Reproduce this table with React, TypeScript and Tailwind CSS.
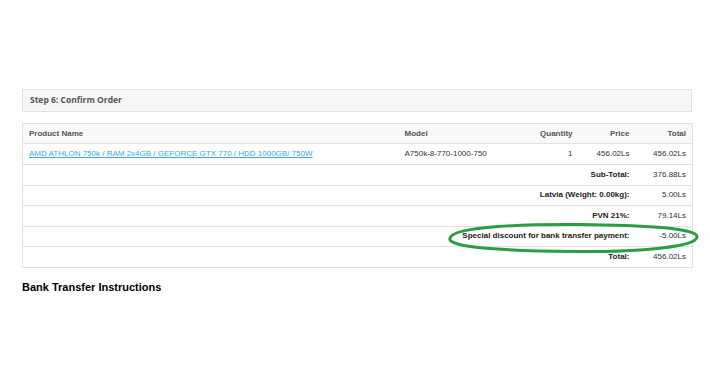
const rows = [
  { label: 'Sub-Total:', value: '376.88Ls' },
  { label: 'Latvia (Weight: 0.00kg):', value: '5.00Ls' },
  { label: 'PVN 21%:', value: '79.14Ls' },
  { label: 'Special discount for bank transfer payment:', value: '-5.00Ls' },
  { label: 'Total:', value: '456.02Ls' },
];

export default function App() {
  return (
    <div className="relative h-[380px] w-[710px] bg-white text-[8px] text-[#333] font-['Liberation_Sans',Arial,sans-serif]">
      <div className="ml-[22px] w-[670px] pt-[89px]">
        {/* checkout step header */}
        <div className="h-[23px] border border-[#e2e2e2] bg-[#f6f6f6] pl-[7px] flex items-center font-['Open_Sans',Arial,sans-serif] text-[8.5px] font-bold text-[#555]">
          Step 6: Confirm Order
        </div>

        <table className="mt-[11px] w-full border-collapse table-fixed border border-[#e2e2e2] leading-none">
          <colgroup>
            <col className="w-[376px]" />
            <col className="w-[122px]" />
            <col className="w-[58px]" />
            <col className="w-[57px]" />
            <col className="w-[57px]" />
          </colgroup>
          <thead>
            <tr className="h-[20px] bg-[#f8f8f8] font-bold text-[#555]">
              <td className="px-[6px] border-b border-[#e2e2e2]">Product Name</td>
              <td className="px-[6px] border-b border-[#e2e2e2]">Model</td>
              <td className="px-[6px] text-right border-b border-[#e2e2e2]">Quantity</td>
              <td className="px-[6px] text-right border-b border-[#e2e2e2]">Price</td>
              <td className="px-[6px] text-right border-b border-[#e2e2e2]">Total</td>
            </tr>
          </thead>
          <tbody>
            <tr className="h-[21px]">
              <td className="px-[6px] border-b border-[#e2e2e2]">
                <a href="#" className="text-[#3aa9dc] underline whitespace-nowrap">
                  AMD ATHLON 750k / RAM 2x4GB / GEFORCE GTX 770 / HDD 1000GB/ 750W
                </a>
              </td>
              <td className="px-[6px] border-b border-[#e2e2e2] whitespace-nowrap">A750k-8-770-1000-750</td>
              <td className="px-[6px] text-right border-b border-[#e2e2e2]">1</td>
              <td className="px-[6px] text-right border-b border-[#e2e2e2]">456.02Ls</td>
              <td className="px-[6px] text-right border-b border-[#e2e2e2]">456.02Ls</td>
            </tr>
            {rows.map((r) => (
              <tr key={r.label} className="h-[20.5px]">
                <td colSpan={4} className="px-[6px] text-right font-bold text-[#222] border-b border-[#e2e2e2]">
                  {r.label}
                </td>
                <td className="px-[6px] text-right border-b border-[#e2e2e2]">{r.value}</td>
              </tr>
            ))}
          </tbody>
        </table>

        <h2 className="mt-[11px] text-[11px] font-bold text-black">Bank Transfer Instructions</h2>
      </div>

      {/* hand-drawn highlight around the discount line */}
      <svg className="absolute left-[440px] top-[220px]" width="270" height="36" viewBox="0 0 270 36" fill="none">
        <path
          d="M10 18 C 14 6, 90 4, 140 4.5 C 200 5, 258 8, 257 17 C 256 27, 200 32, 135 31.5 C 70 31, 6 28, 10 18 Z"
          stroke="#2c9d45"
          strokeWidth="3"
        />
      </svg>
    </div>
  );
}
